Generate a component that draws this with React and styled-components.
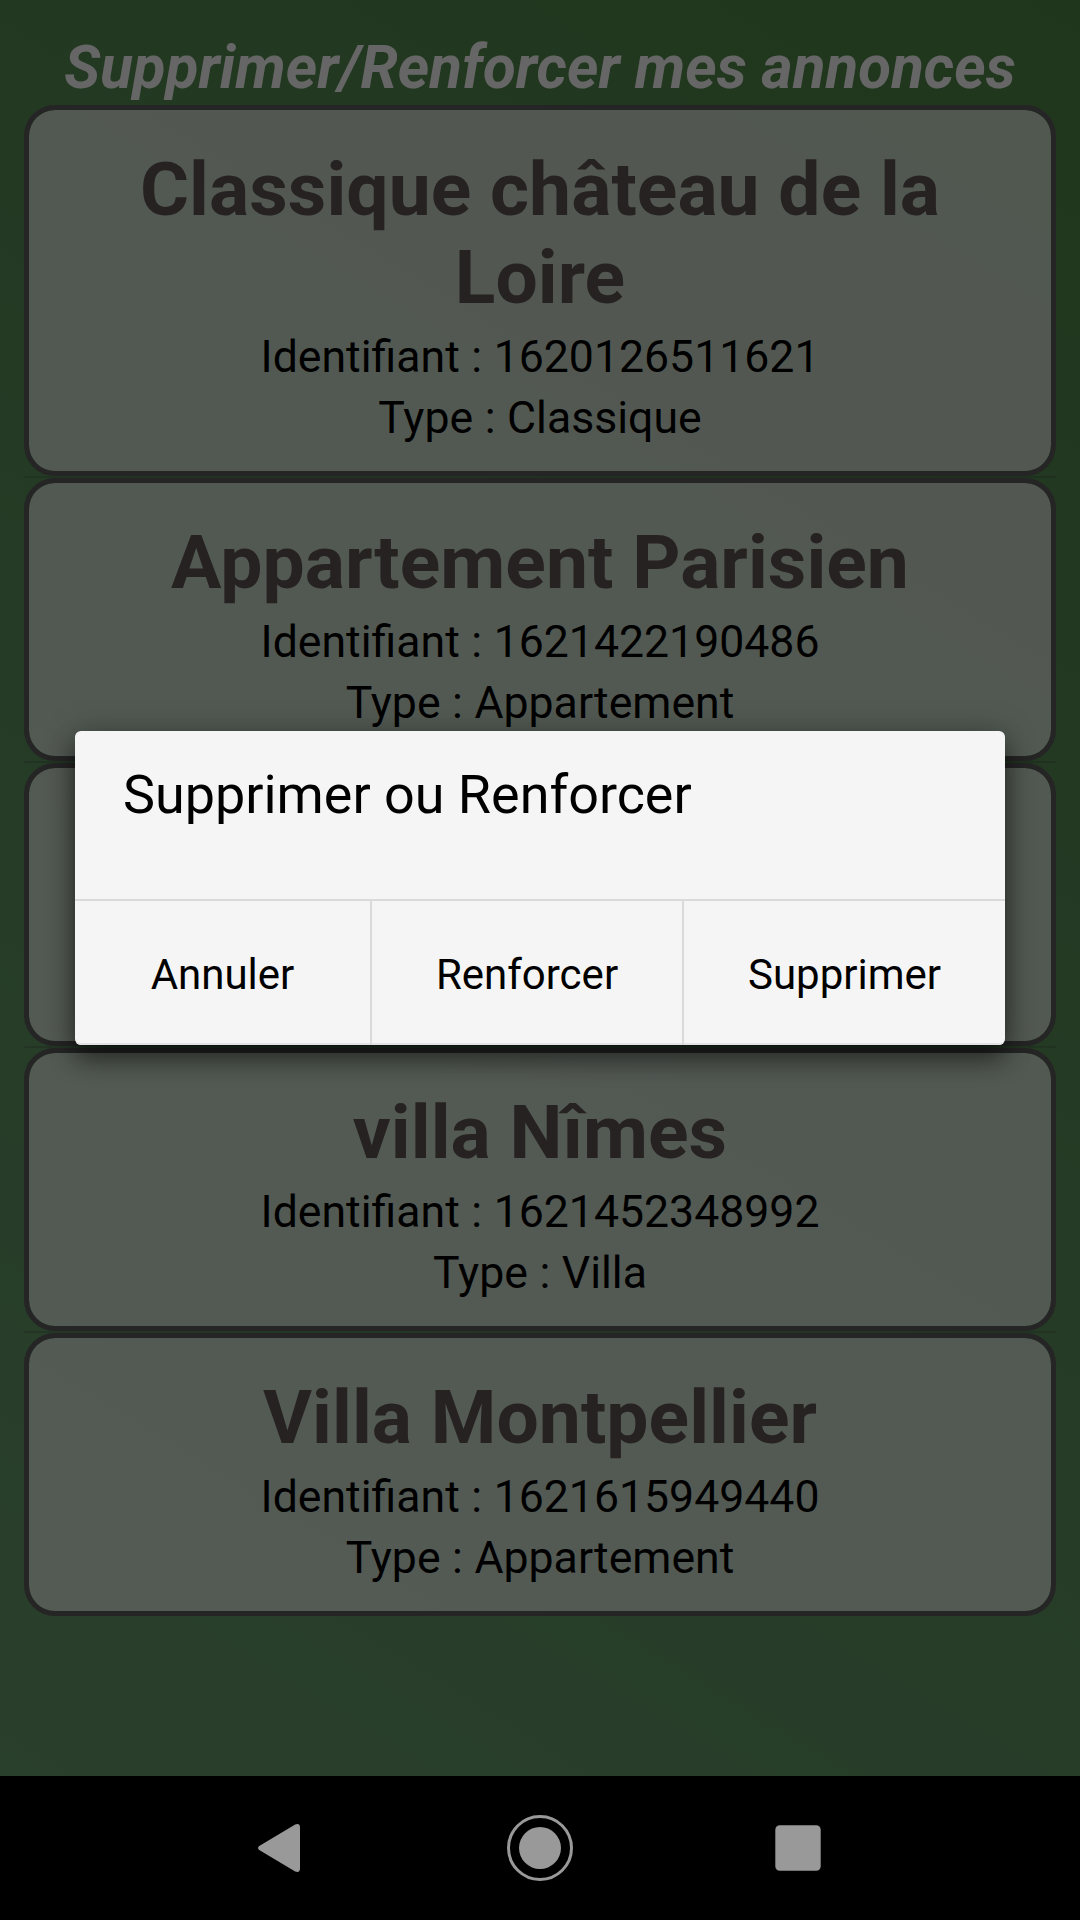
import React from "react";
import styled, { createGlobalStyle } from "styled-components";

const GlobalStyle = createGlobalStyle`
  *, *::before, *::after { box-sizing: border-box; }
  html, body { margin: 0; padding: 0; background: #000; }
  body { font-family: Roboto, "Liberation Sans", sans-serif; color: #000; }
`;

const Screen = styled.div`
  position: relative;
  display: flex;
  flex-direction: column;
  width: 1080px;
  height: 1920px;
  overflow: hidden;
`;

const Page = styled.main`
  flex: 1;
  display: flex;
  flex-direction: column;
  padding: 33px 24px 0;
  background: linear-gradient(211.3deg, rgb(80, 135, 72) 0%, rgb(104, 160, 112) 100%);
`;

const PageTitle = styled.h1`
  margin: 0;
  height: 72px;
  font-size: 60px;
  line-height: 70px;
  font-weight: 700;
  font-style: italic;
  letter-spacing: 0.08px;
  text-align: center;
  white-space: nowrap;
  color: #fff;
`;

const List = styled.ul`
  display: flex;
  flex-direction: column;
  margin: 0;
  padding: 0;
  list-style: none;
`;

const Row = styled.li`
  border-bottom: 2px solid ${(p) => (p.$last ? "transparent" : "rgba(60, 60, 60, 0.22)")};
`;

const Card = styled.article`
  display: flex;
  flex-direction: column;
  align-items: center;
  padding: 35px 48px 22px;
  border: 5px solid rgb(92, 92, 92);
  border-radius: 31px;
  background: rgba(255, 255, 255, 0.7);
  background-clip: padding-box;
  text-align: center;
`;

const CardTitle = styled.h2`
  margin: 0 0 6px;
  font-size: 75px;
  line-height: 88px;
  font-weight: 700;
  letter-spacing: 0.06px;
  color: rgb(98, 86, 86);
`;

const CardInfo = styled.p`
  margin: 0;
  font-size: 44.6px;
  line-height: 61px;
  word-spacing: 0.5px;
  white-space: nowrap;
`;

const NavBar = styled.nav`
  display: flex;
  align-items: center;
  justify-content: center;
  gap: 186px;
  height: 144px;
  background: #000;
`;

const NavIcon = styled.svg`
  width: 72px;
  height: 72px;
  fill: #999;
`;

const Scrim = styled.div`
  position: absolute;
  inset: 0 0 144px;
  display: flex;
  align-items: center;
  justify-content: center;
  background: rgba(0, 0, 0, 0.6);
`;

const Dialog = styled.section`
  display: flex;
  flex-direction: column;
  width: 930px;
  height: 314px;
  border-radius: 6px;
  overflow: hidden;
  background: #f5f5f5;
  box-shadow: 0 15px 26px rgba(0, 0, 0, 0.46), 0 2px 32px rgba(0, 0, 0, 0.26);
`;

const DialogTitle = styled.h3`
  flex: 1;
  margin: 0;
  padding: 32px 48px 0;
  font-size: 53.9px;
  line-height: 63px;
  font-weight: 400;
`;

const Actions = styled.div`
  display: grid;
  grid-template-columns: 295px 312px 323px;
  height: 146px;
  border-top: 2px solid #dadada;
  box-shadow: inset 0 -2px 0 #e2e2e2;
`;

const Action = styled.button`
  margin: 0;
  padding: 2px 0 0;
  border: 0;
  border-left: ${(p) => (p.$divided ? "2px solid #dadada" : "0")};
  background: transparent;
  font: 400 42px/49px Roboto, "Liberation Sans", sans-serif;
  color: #000;
`;

const listings = [
  { name: "Classique château de la Loire", id: "1620126511621", type: "Classique" },
  { name: "Appartement Parisien", id: "1621422190486", type: "Appartement" },
  { name: "\u00a0", id: "", type: "" },
  { name: "villa Nîmes", id: "1621452348992", type: "Villa" },
  { name: "Villa Montpellier", id: "1621615949440", type: "Appartement" },
];

const actions = ["Annuler", "Renforcer", "Supprimer"];

export default function App() {
  return (
    <>
      <GlobalStyle />
      <Screen>
        <Page>
          <PageTitle>Supprimer/Renforcer mes annonces</PageTitle>
          <List>
            {listings.map((item, i) => (
              <Row key={i} $last={i === listings.length - 1}>
                <Card>
                  <CardTitle>{item.name}</CardTitle>
                  <CardInfo>{item.id ? `Identifiant : ${item.id}` : "\u00a0"}</CardInfo>
                  <CardInfo>{item.type ? `Type : ${item.type}` : "\u00a0"}</CardInfo>
                </Card>
              </Row>
            ))}
          </List>
        </Page>
        <NavBar>
          <NavIcon viewBox="0 0 72 72" aria-label="Retour">
            <path d="M49.2 12.5 L13.2 34 Q10.8 36 13.2 38 L49.2 59.5 Q54 61.2 54 56.5 V15.5 Q54 10.8 49.2 12.5 Z" />
          </NavIcon>
          <NavIcon viewBox="0 0 72 72" aria-label="Accueil">
            <circle cx="36" cy="36" r="31.5" fill="none" stroke="#999" strokeWidth="3" />
            <circle cx="36" cy="36" r="21" />
          </NavIcon>
          <NavIcon viewBox="0 0 72 72" aria-label="Applications">
            <rect x="13.3" y="13.3" width="45.4" height="45.4" rx="4.5" />
          </NavIcon>
        </NavBar>
        <Scrim>
          <Dialog>
            <DialogTitle>Supprimer ou Renforcer</DialogTitle>
            <Actions>
              {actions.map((label, i) => (
                <Action key={label} $divided={i > 0}>
                  {label}
                </Action>
              ))}
            </Actions>
          </Dialog>
        </Scrim>
      </Screen>
    </>
  );
}
